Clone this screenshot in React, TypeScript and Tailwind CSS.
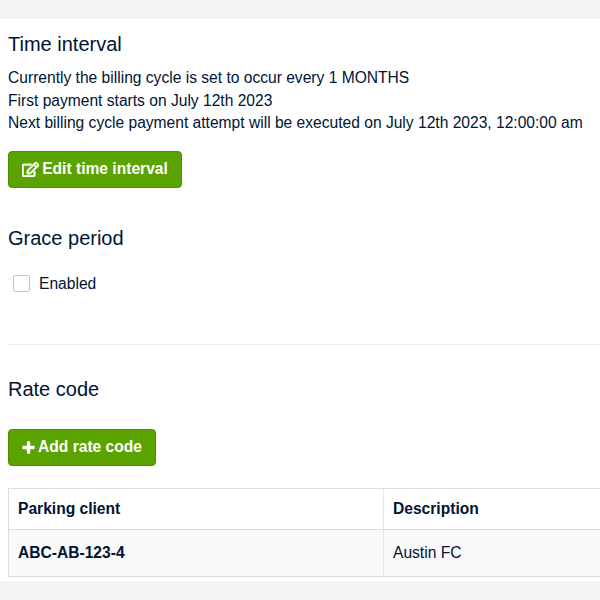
import { FaRegEdit, FaPlus } from "react-icons/fa";

export default function App() {
  return (
    <div className="w-[600px] h-[600px] overflow-hidden bg-[#f3f3f3] pt-[19px] font-['Liberation_Sans',Arial,sans-serif] text-[#001433]">
      <div className="bg-white h-[562px] pl-2 overflow-hidden">
        <h2 className="text-[20px] leading-[24px] pt-[13px] font-normal">Time interval</h2>
        <div className="mt-[11px] text-[15.6px] leading-[22.5px] whitespace-nowrap">
          <p>Currently the billing cycle is set to occur every 1 MONTHS</p>
          <p>First payment starts on July 12th 2023</p>
          <p>Next billing cycle payment attempt will be executed on July 12th 2023, 12:00:00 am</p>
        </div>
        <button className="mt-[16px] h-[37px] w-[174px] flex items-center justify-center gap-[3px] rounded-[4px] bg-[#5aa300] border border-[#4d8f00] text-white font-bold text-[15.6px]">
          <FaRegEdit className="w-[17px] h-[15px]" stroke="currentColor" strokeWidth={24} />
          Edit time interval
        </button>
        <h2 className="text-[20px] leading-[24px] mt-[38px] font-normal">Grace period</h2>
        <label className="mt-[23px] ml-[5px] flex items-center gap-[9px] text-[15.6px] leading-[22px]">
          <span className="w-[17px] h-[17px] border border-[#c4c4c8] rounded-[2px] bg-white" />
          Enabled
        </label>
        <div className="mt-[49px] border-t border-[#eeeeee]" />
        <h2 className="text-[20px] leading-[24px] mt-[32px] font-normal">Rate code</h2>
        <button className="mt-[28px] h-[37px] w-[148px] flex items-center justify-center gap-[3px] rounded-[4px] bg-[#5aa300] border border-[#4d8f00] text-white font-bold text-[15.6px]">
          <FaPlus className="w-[13px] h-[13px]" stroke="currentColor" strokeWidth={40} />
          Add rate code
        </button>
        <div className="mt-[22px] w-[600px] border-t border-b border-l border-[#dddddd] text-[15.6px]">
          <div className="flex h-[40px] items-center bg-white font-bold">
            <div className="w-[375px] h-full flex items-center pl-[9px] border-r border-[#e6e6e6]">Parking client</div>
            <div className="pl-[9px]">Description</div>
          </div>
          <div className="flex h-[47px] items-center bg-[#f9f9f9] border-t border-[#dddddd]">
            <div className="w-[375px] h-full flex items-center font-bold pl-[9px] pt-[1px] border-r border-[#e6e6e6]">ABC-AB-123-4</div>
            <div className="pl-[9px] pt-[1px]">Austin FC</div>
          </div>
        </div>
      </div>
    </div>
  );
}
